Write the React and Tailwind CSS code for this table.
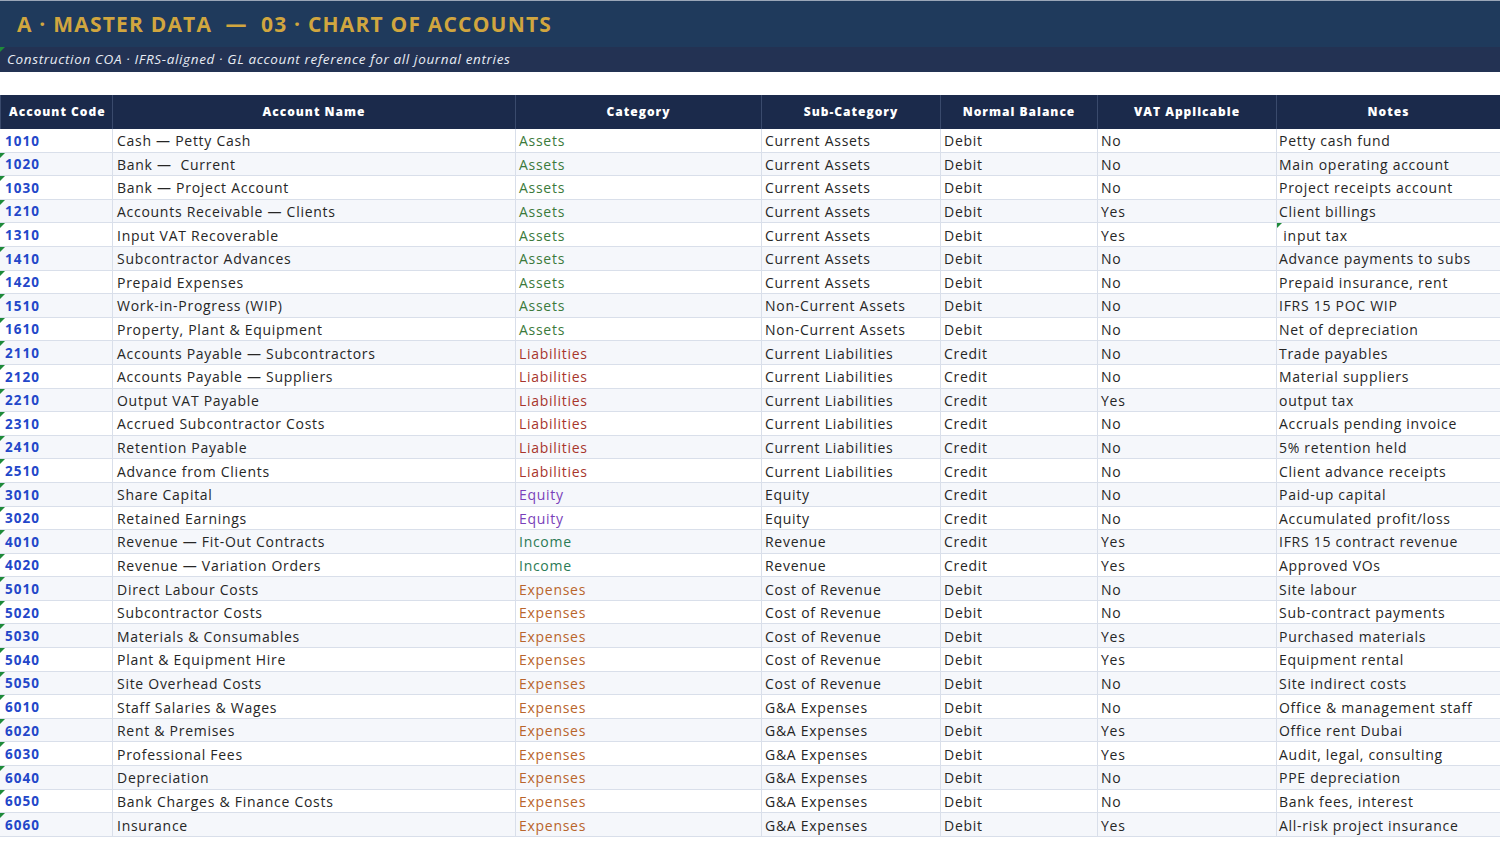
const rows = [
  ['1010', 'Cash — Petty Cash', 'Assets', 'Current Assets', 'Debit', 'No', 'Petty cash fund'],
  ['1020', 'Bank —  Current', 'Assets', 'Current Assets', 'Debit', 'No', 'Main operating account'],
  ['1030', 'Bank — Project Account', 'Assets', 'Current Assets', 'Debit', 'No', 'Project receipts account'],
  ['1210', 'Accounts Receivable — Clients', 'Assets', 'Current Assets', 'Debit', 'Yes', 'Client billings'],
  ['1310', 'Input VAT Recoverable', 'Assets', 'Current Assets', 'Debit', 'Yes', ' input tax'],
  ['1410', 'Subcontractor Advances', 'Assets', 'Current Assets', 'Debit', 'No', 'Advance payments to subs'],
  ['1420', 'Prepaid Expenses', 'Assets', 'Current Assets', 'Debit', 'No', 'Prepaid insurance, rent'],
  ['1510', 'Work-in-Progress (WIP)', 'Assets', 'Non-Current Assets', 'Debit', 'No', 'IFRS 15 POC WIP'],
  ['1610', 'Property, Plant & Equipment', 'Assets', 'Non-Current Assets', 'Debit', 'No', 'Net of depreciation'],
  ['2110', 'Accounts Payable — Subcontractors', 'Liabilities', 'Current Liabilities', 'Credit', 'No', 'Trade payables'],
  ['2120', 'Accounts Payable — Suppliers', 'Liabilities', 'Current Liabilities', 'Credit', 'No', 'Material suppliers'],
  ['2210', 'Output VAT Payable', 'Liabilities', 'Current Liabilities', 'Credit', 'Yes', 'output tax'],
  ['2310', 'Accrued Subcontractor Costs', 'Liabilities', 'Current Liabilities', 'Credit', 'No', 'Accruals pending invoice'],
  ['2410', 'Retention Payable', 'Liabilities', 'Current Liabilities', 'Credit', 'No', '5% retention held'],
  ['2510', 'Advance from Clients', 'Liabilities', 'Current Liabilities', 'Credit', 'No', 'Client advance receipts'],
  ['3010', 'Share Capital', 'Equity', 'Equity', 'Credit', 'No', 'Paid-up capital'],
  ['3020', 'Retained Earnings', 'Equity', 'Equity', 'Credit', 'No', 'Accumulated profit/loss'],
  ['4010', 'Revenue — Fit-Out Contracts', 'Income', 'Revenue', 'Credit', 'Yes', 'IFRS 15 contract revenue'],
  ['4020', 'Revenue — Variation Orders', 'Income', 'Revenue', 'Credit', 'Yes', 'Approved VOs'],
  ['5010', 'Direct Labour Costs', 'Expenses', 'Cost of Revenue', 'Debit', 'No', 'Site labour'],
  ['5020', 'Subcontractor Costs', 'Expenses', 'Cost of Revenue', 'Debit', 'No', 'Sub-contract payments'],
  ['5030', 'Materials & Consumables', 'Expenses', 'Cost of Revenue', 'Debit', 'Yes', 'Purchased materials'],
  ['5040', 'Plant & Equipment Hire', 'Expenses', 'Cost of Revenue', 'Debit', 'Yes', 'Equipment rental'],
  ['5050', 'Site Overhead Costs', 'Expenses', 'Cost of Revenue', 'Debit', 'No', 'Site indirect costs'],
  ['6010', 'Staff Salaries & Wages', 'Expenses', 'G&A Expenses', 'Debit', 'No', 'Office & management staff'],
  ['6020', 'Rent & Premises', 'Expenses', 'G&A Expenses', 'Debit', 'Yes', 'Office rent Dubai'],
  ['6030', 'Professional Fees', 'Expenses', 'G&A Expenses', 'Debit', 'Yes', 'Audit, legal, consulting'],
  ['6040', 'Depreciation', 'Expenses', 'G&A Expenses', 'Debit', 'No', 'PPE depreciation'],
  ['6050', 'Bank Charges & Finance Costs', 'Expenses', 'G&A Expenses', 'Debit', 'No', 'Bank fees, interest'],
  ['6060', 'Insurance', 'Expenses', 'G&A Expenses', 'Debit', 'Yes', 'All-risk project insurance'],
];

const catColor = {
  Assets: 'text-[#3b7a3b]',
  Liabilities: 'text-[#a8352c]',
  Equity: 'text-[#7a3fba]',
  Income: 'text-[#2b7a55]',
  Expenses: 'text-[#b9652c]',
};

const headers = ['Account Code', 'Account Name', 'Category', 'Sub-Category', 'Normal Balance', 'VAT Applicable', 'Notes'];
const cols = 'grid grid-cols-[112px_403px_246px_179px_157px_179px_224px]';

// Excel "number stored as text" marker
function Flag() {
  return <span className="absolute left-0 top-0 w-0 h-0 border-t-[5px] border-r-[5px] border-t-[#1e8a3a] border-r-transparent" />;
}

export default function App() {
  return (
    <div className="w-[1500px] h-[843px] bg-white overflow-hidden" style={{ fontFamily: '"Open Sans", "Noto Sans", sans-serif' }}>
      <div className="h-[47px] bg-[#1f3a5c] border-t border-[#9aa6b8] flex items-center pl-[17px] pt-[2px]">
        <h1 className="text-[21px] font-bold text-[#d1a63f] tracking-[1.2px]">A · MASTER DATA &nbsp;—&nbsp; 03 · CHART OF ACCOUNTS</h1>
      </div>
      <div className="h-[25px] bg-[#233253] flex items-center pl-[7px] relative">
        <Flag />
        <p className="text-[13.5px] italic text-[#e8ecf3] tracking-[0.65px]">Construction COA · IFRS-aligned · GL account reference for all journal entries</p>
      </div>
      <div className="h-[23px]" />
      <div className={`${cols} h-[34px] bg-[#1b2a4b] text-white text-[12px] font-extrabold tracking-[1px]`}>
        {headers.map((h, i) => (
          <div key={h} className={`flex items-center ${i === 0 ? 'pl-[8px]' : 'justify-center'} border-l border-[#3a4a6c]`}>{h}</div>
        ))}
      </div>
      {rows.map((r, idx) => (
        <div key={r[0]} className={`${cols} h-[23.6px] text-[14px] font-medium tracking-[0.72px] text-[#262626] border-b border-[#d9dfea] ${idx % 2 ? 'bg-[#f5f7fb]' : 'bg-white'}`}>
          <div className="relative flex items-center pl-[5px] pt-[1px] font-bold text-[#2347c9] text-[13.5px] tracking-[1px]">
            {idx > 0 && <Flag />}
            {r[0]}
          </div>
          <div className="flex items-center pl-[4px] pt-[1px] border-l border-[#d9dfea] whitespace-pre">{r[1]}</div>
          <div className={`flex items-center pl-[3px] pt-[1px] border-l border-[#d9dfea] ${catColor[r[2]]}`}>{r[2]}</div>
          <div className="flex items-center pl-[3px] pt-[1px] border-l border-[#d9dfea]">{r[3]}</div>
          <div className="flex items-center pl-[3px] pt-[1px] border-l border-[#d9dfea]">{r[4]}</div>
          <div className="flex items-center pl-[3px] pt-[1px] border-l border-[#d9dfea]">{r[5]}</div>
          <div className="relative flex items-center pl-[2px] pt-[1px] border-l border-[#d9dfea] whitespace-pre">
            {r[0] === '1310' && <Flag />}
            {r[6]}
          </div>
        </div>
      ))}
    </div>
  );
}
